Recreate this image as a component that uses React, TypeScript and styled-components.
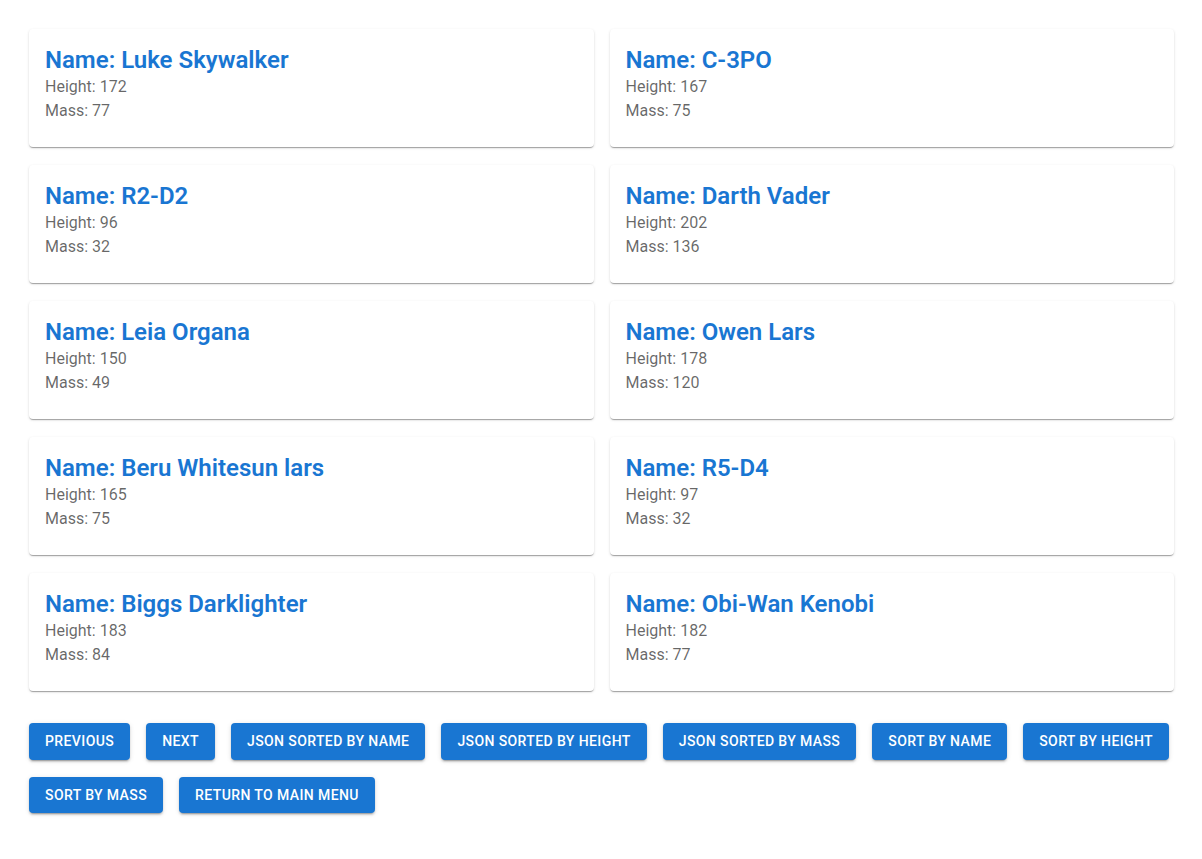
import React from 'react';
import styled, { createGlobalStyle } from 'styled-components';

const GlobalStyle = createGlobalStyle`
  body {
    margin: 0;
    background: #fff;
    font-family: Roboto, "Liberation Sans", Arial, sans-serif;
  }
`;

const Page = styled.div`
  padding: 29px 28px 40px 29px;
`;

const CardGrid = styled.div`
  display: grid;
  grid-template-columns: 1fr 1fr;
  column-gap: 16px;
  row-gap: 18px;
`;

const Card = styled.div`
  background: #fff;
  border-radius: 4px;
  box-shadow: 0px 2px 1px -1px rgba(0, 0, 0, 0.2), 0px 1px 1px 0px rgba(0, 0, 0, 0.14),
    0px 1px 3px 0px rgba(0, 0, 0, 0.12);
  padding: 16px 16px 24px;
`;

const Title = styled.h5`
  margin: 0;
  font-size: 24px;
  font-weight: 600;
  line-height: 30px;
  color: #1976d2;
`;

const Info = styled.p`
  margin: 0;
  font-size: 16px;
  line-height: 1.5;
  color: rgba(0, 0, 0, 0.6);
`;

const Actions = styled.div`
  display: flex;
  flex-wrap: wrap;
  column-gap: 16px;
  row-gap: 17px;
  margin-top: 32px;
`;

const Button = styled.button`
  border: 0;
  border-radius: 4px;
  background: #1976d2;
  color: #fff;
  font-family: Roboto, "Liberation Sans", Arial, sans-serif;
  font-size: 14px;
  font-weight: 500;
  line-height: 1.75;
  letter-spacing: 0.02857em;
  text-transform: uppercase;
  padding: 6px 16px;
  cursor: pointer;
  box-shadow: 0px 3px 1px -2px rgba(0, 0, 0, 0.2), 0px 2px 2px 0px rgba(0, 0, 0, 0.14),
    0px 1px 5px 0px rgba(0, 0, 0, 0.12);
`;

const people = [
  { name: 'Luke Skywalker', height: 172, mass: 77 },
  { name: 'C-3PO', height: 167, mass: 75 },
  { name: 'R2-D2', height: 96, mass: 32 },
  { name: 'Darth Vader', height: 202, mass: 136 },
  { name: 'Leia Organa', height: 150, mass: 49 },
  { name: 'Owen Lars', height: 178, mass: 120 },
  { name: 'Beru Whitesun lars', height: 165, mass: 75 },
  { name: 'R5-D4', height: 97, mass: 32 },
  { name: 'Biggs Darklighter', height: 183, mass: 84 },
  { name: 'Obi-Wan Kenobi', height: 182, mass: 77 },
];

const buttons = [
  'Previous',
  'Next',
  'JSON sorted by name',
  'JSON sorted by height',
  'JSON sorted by mass',
  'Sort by name',
  'Sort by height',
  'Sort by mass',
  'Return to main menu',
];

const App: React.FC = () => {
  return (
    <Page>
      <GlobalStyle />
      <CardGrid>
        {people.map((p) => (
          <Card key={p.name}>
            <Title>Name: {p.name}</Title>
            <Info>Height: {p.height}</Info>
            <Info>Mass: {p.mass}</Info>
          </Card>
        ))}
      </CardGrid>
      <Actions>
        {buttons.map((b) => (
          <Button key={b}>{b}</Button>
        ))}
      </Actions>
    </Page>
  );
};

export default App;
